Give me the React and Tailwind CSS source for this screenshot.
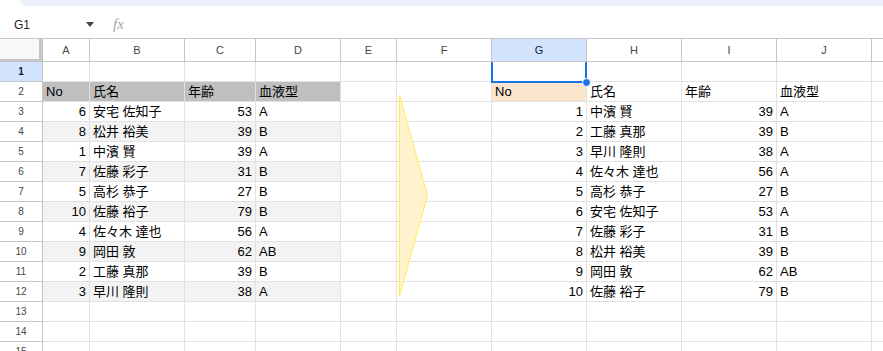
import React from "react";

const COLS = [
  { key: "A", w: 47 },
  { key: "B", w: 95 },
  { key: "C", w: 71 },
  { key: "D", w: 85 },
  { key: "E", w: 56 },
  { key: "F", w: 95 },
  { key: "G", w: 95 },
  { key: "H", w: 95 },
  { key: "I", w: 95 },
  { key: "J", w: 95 },
  { key: "K", w: 40 },
];

const left = [
  [6, "安宅 佐知子", 53, "A"],
  [8, "松井 裕美", 39, "B"],
  [1, "中濱 賢", 39, "A"],
  [7, "佐藤 彩子", 31, "B"],
  [5, "高杉 恭子", 27, "B"],
  [10, "佐藤 裕子", 79, "B"],
  [4, "佐々木 達也", 56, "A"],
  [9, "岡田 敦", 62, "AB"],
  [2, "工藤 真那", 39, "B"],
  [3, "早川 隆則", 38, "A"],
];

const right = [...left].sort((a, b) => a[0] - b[0]);

const font = { fontFamily: '"Liberation Sans", Arial, "Noto Sans CJK JP", sans-serif' };

function buildRow(r) {
  const cells = {};
  if (r === 2) {
    ["No", "氏名", "年齢", "血液型"].forEach((t, i) => {
      cells["ABCD"[i]] = { text: t, bg: "bg-[#bfbfbf]" };
    });
    cells.G = { text: "No", bg: "bg-[#fce5cd]" };
    cells.H = { text: "氏名" };
    cells.I = { text: "年齢" };
    cells.J = { text: "血液型" };
  } else if (r >= 3 && r <= 12) {
    const l = left[r - 3];
    const stripe = r % 2 === 0 ? "bg-[#f3f3f3]" : "";
    cells.A = { text: l[0], right: true, bg: stripe };
    cells.B = { text: l[1], bg: stripe };
    cells.C = { text: l[2], right: true, bg: stripe };
    cells.D = { text: l[3], bg: stripe };
    const g = right[r - 3];
    cells.G = { text: g[0], right: true };
    cells.H = { text: g[1] };
    cells.I = { text: g[2], right: true };
    cells.J = { text: g[3] };
  }
  return cells;
}

export default function App() {
  const rows = Array.from({ length: 15 }, (_, i) => i + 1);
  return (
    <div className="relative w-[883px] h-[351px] overflow-hidden bg-white text-black" style={font}>
      <div className="h-[39px] border-b border-[#c4c7c5] bg-white">
        <div className="ml-[20px] h-[6px] rounded-bl-[12px] bg-[#edf2fa]" />
        <div className="flex items-center h-[32px] pt-[5px]">
          <span className="ml-[14px] text-[12px] text-[#1f1f1f]">G1</span>
          <svg className="ml-[56px]" width="8" height="5" viewBox="0 0 8 5">
            <path d="M0 0 L8 0 L4 5 Z" fill="#444746" />
          </svg>
          <span
            className="ml-[19px] text-[15px] italic text-[#a0a4a8]"
            style={{ fontFamily: '"Liberation Serif", serif' }}
          >
            fx
          </span>
        </div>
      </div>

      <div className="flex h-[23px]">
        <div className="w-[43px] shrink-0 bg-[#f8f9fa] border-r-4 border-b-[3px] border-[#c4c7c5]" />
        {COLS.map((c) => (
          <div
            key={c.key}
            style={{ width: c.w }}
            className={`shrink-0 flex items-center justify-center border-r border-b border-[#c4c7c5] text-[11px] ${
              c.key === "G" ? "bg-[#d3e3fd] text-[#0b1f3f]" : "text-[#444746]"
            }`}
          >
            {c.key === "K" ? "" : c.key}
          </div>
        ))}
      </div>

      {rows.map((r) => {
        const cells = buildRow(r);
        return (
          <div key={r} className="flex h-[20px]">
            <div
              className={`w-[43px] shrink-0 flex items-center justify-center border-r border-b border-[#c4c7c5] text-[10px] ${
                r === 1 ? "bg-[#d3e3fd] text-[#0b1f3f] font-bold" : "text-[#444746]"
              }`}
            >
              {r}
            </div>
            {COLS.map((c) => {
              const cell = cells[c.key];
              return (
                <div
                  key={c.key}
                  style={{ width: c.w }}
                  className={`shrink-0 flex items-center px-[3px] border-r border-b border-[#e1e1e1] text-[13px] whitespace-nowrap overflow-hidden ${
                    cell && cell.right ? "justify-end" : ""
                  } ${cell && cell.bg ? cell.bg : ""}`}
                >
                  {cell ? cell.text : ""}
                </div>
              );
            })}
          </div>
        );
      })}

      {/* selection on G1 */}
      <div className="absolute left-[491px] top-[62px] w-[96px] h-[21px] border-l-2 border-r-2 border-b-2 border-[#1a73e8]" />
      <div className="absolute left-[582px] top-[78px] w-[9px] h-[9px] rounded-full bg-[#1a73e8] border border-white" />

      {/* arrow shape */}
      <svg className="absolute left-[398px] top-[94px]" width="31" height="203" viewBox="0 0 31 203">
        <polygon points="1.5,1 29.5,101.5 1.5,202" fill="#fff2cc" stroke="#ffee58" strokeWidth="1" />
      </svg>
    </div>
  );
}
